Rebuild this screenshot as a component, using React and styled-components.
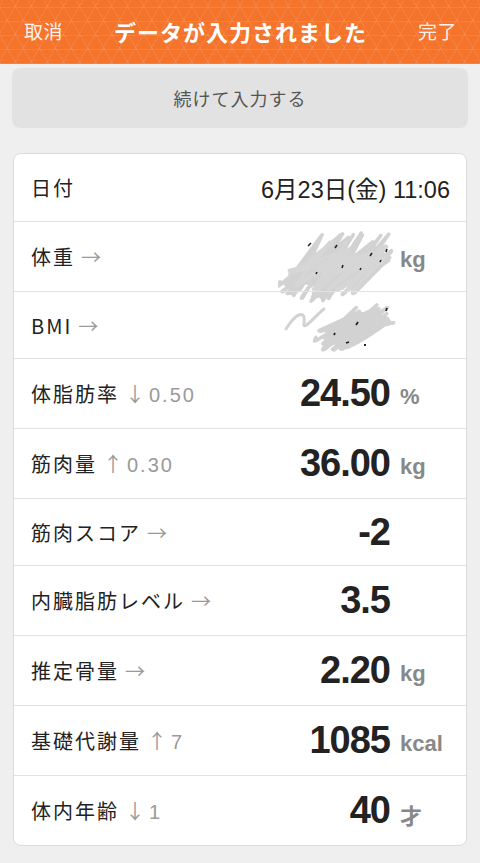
import React from "react"
import styled, { createGlobalStyle } from "styled-components"

const GlobalStyle = createGlobalStyle`
  html, body {
    margin: 0;
    padding: 0;
    background: #efefef;
  }
  body {
    font-family: "Liberation Sans", "Noto Sans CJK JP", sans-serif;
    color: #222;
  }
`

const Page = styled.div`
  min-height: 863px;
  background: #efefef;
`

const Header = styled.header`
  align-items: center;
  background-color: #f5742c;
  background-image:
    repeating-linear-gradient(0deg, rgba(255, 255, 255, 0.09) 0 1px, transparent 1px 13.9px),
    repeating-linear-gradient(60deg, rgba(255, 255, 255, 0.09) 0 1px, transparent 1px 13.9px),
    repeating-linear-gradient(-60deg, rgba(255, 255, 255, 0.09) 0 1px, transparent 1px 13.9px);
  display: flex;
  height: 64px;
  justify-content: space-between;
  padding: 0 23px 0 24px;
  box-sizing: border-box;
`

const NavButton = styled.span`
  color: rgba(255, 255, 255, 0.92);
  font-family: "Noto Sans CJK JP", sans-serif;
  font-size: 19px;
  letter-spacing: 0.5px;
  margin-top: -3px;
`

const Title = styled.h1`
  color: #fff;
  font-family: "Noto Sans CJK JP", sans-serif;
  font-size: 22px;
  font-weight: 700;
  letter-spacing: 1px;
  margin: -3px 0 0;
`

const Content = styled.main`
  display: flex;
  flex-direction: column;
  gap: 25px;
  padding: 4px 12px 15px;
`

const ContinueButton = styled.button`
  background: #e2e2e2;
  border: none;
  border-radius: 8px;
  color: #555;
  font-family: "Noto Sans CJK JP", sans-serif;
  font-size: 18px;
  height: 60px;
  letter-spacing: 1px;
  width: 100%;
`

const Card = styled.section`
  background: #fff;
  border: 1px solid #dcdcdc;
  border-radius: 8px;
  overflow: hidden;
  margin: 0 1px;
`

const Row = styled.div`
  align-items: center;
  box-sizing: border-box;
  display: grid;
  grid-template-columns: ${(p) => (p.$date ? "1fr auto" : "1fr auto 66px")};
  column-gap: 10px;
  height: ${(p) => (p.$short ? "67px" : "70px")};
  padding: ${(p) => (p.$date ? "0 16px 0 17px" : "0 0 0 17px")};
  position: relative;

  & + & {
    border-top: 1px solid #e2e2e2;
  }
`

const Label = styled.div`
  align-items: baseline;
  display: flex;
  font-family: "Noto Sans CJK JP", sans-serif;
  font-size: 20px;
  letter-spacing: 2px;
  white-space: nowrap;
`

const Delta = styled.span`
  color: #9a9a9a;
  font-family: "Liberation Sans", "Noto Sans CJK JP", sans-serif;
  font-size: 20px;
  letter-spacing: 2px;
  margin-left: 6px;

  b {
    font-family: "Noto Sans CJK JP", sans-serif;
    font-weight: 400;
    letter-spacing: 0;
    margin-right: 4px;
  }
`

const DateValue = styled.div`
  font-size: 23.5px;
  white-space: nowrap;
`

const Value = styled.div`
  font-size: 38px;
  font-weight: 700;
  letter-spacing: -1px;
  text-align: right;
`

const Unit = styled.div`
  color: #888;
  font-family: "Liberation Sans", "Noto Sans CJK JP", sans-serif;
  font-size: 22px;
  font-weight: 700;
  margin-top: 6px;
`

const Scribble = styled.svg`
  left: ${(p) => p.$x}px;
  pointer-events: none;
  position: absolute;
  top: ${(p) => p.$y}px;
`

// hand-drawn masking over the hidden values
const scribblePath = (w, h, n, seed) => {
  let s = seed
  const rnd = () => {
    s = (s * 9301 + 49297) % 233280
    return s / 233280
  }
  let d = `M 2 ${(h * 0.7).toFixed(1)}`
  for (let i = 0; i < n; i++) {
    const x = (i / (n - 1)) * (w - 50)
    const lo = h - 3 - rnd() * h * 0.45
    const hi = 3 + rnd() * h * 0.45
    d += ` Q ${(x - 4 + rnd() * 10).toFixed(1)} ${(lo + 4).toFixed(1)} ${(x + rnd() * 10).toFixed(1)} ${lo.toFixed(1)}`
    d += ` L ${(x + 36 + rnd() * 14).toFixed(1)} ${hi.toFixed(1)}`
  }
  return d
}

const WeightScribble = () => (
  <Scribble $x={264} $y={8} width="122" height="74" viewBox="0 0 122 74">
    <path d={scribblePath(122, 74, 46, 7)} fill="none" stroke="#d2d2d2" strokeWidth="3.5" strokeLinejoin="round" strokeLinecap="round" />
    <path d={scribblePath(110, 60, 20, 91)} transform="translate(8 6)" fill="none" stroke="#d6d6d6" strokeWidth="3" strokeLinejoin="round" strokeLinecap="round" />
    <path d="M30 16 l3 -3 M57 18 l2 -3 M64 38 l1 -3 M92 26 l2 -3 M108 22 l1 -3 M82 40 l1 -2 M38 44 l1 -2 M102 32 l1 -2" stroke="#222" strokeWidth="1.6" />
  </Scribble>
)

const BmiScribble = () => (
  <Scribble $x={268} $y={7} width="118" height="56" viewBox="0 0 118 56">
    <path d="M4 30 C 14 14, 24 10, 22 24 C 20 34, 36 14, 42 10" fill="none" stroke="#d2d2d2" strokeWidth="3" strokeLinecap="round" />
    <path d={scribblePath(82, 52, 30, 31)} transform="translate(32 2)" fill="none" stroke="#d2d2d2" strokeWidth="3.5" strokeLinejoin="round" strokeLinecap="round" />
    <path d="M104 12 l1 -3 M74 26 l2 -3 M64 44 l3 -1 M52 36 l1 -2 M82 46 l2 0" stroke="#222" strokeWidth="1.8" />
  </Scribble>
)

const rows = [
  { label: "体重", arrow: "→", value: "", unit: "kg", scribble: <WeightScribble /> },
  { label: "BMI", arrow: "→", value: "", unit: "", short: true, scribble: <BmiScribble /> },
  { label: "体脂肪率", arrow: "↓", diff: "0.50", value: "24.50", unit: "%" },
  { label: "筋肉量", arrow: "↑", diff: "0.30", value: "36.00", unit: "kg" },
  { label: "筋肉スコア", arrow: "→", value: "-2", unit: "", short: true },
  { label: "内臓脂肪レベル", arrow: "→", value: "3.5", unit: "" },
  { label: "推定骨量", arrow: "→", value: "2.20", unit: "kg" },
  { label: "基礎代謝量", arrow: "↑", diff: "7", value: "1085", unit: "kcal" },
  { label: "体内年齢", arrow: "↓", diff: "1", value: "40", unit: "才" },
]

const App = () => (
  <Page>
    <GlobalStyle />
    <Header>
      <NavButton>取消</NavButton>
      <Title>データが入力されました</Title>
      <NavButton>完了</NavButton>
    </Header>

    <Content>
      <ContinueButton>続けて入力する</ContinueButton>

      <Card>
        <Row $date $short>
          <Label>日付</Label>
          <DateValue>6月23日(金) 11:06</DateValue>
        </Row>
        {rows.map((r) => (
          <Row key={r.label} $short={r.short}>
            <Label>
              {r.label}
              <Delta>
                <b>{r.arrow}</b>
                {r.diff}
              </Delta>
            </Label>
            <Value>{r.value}</Value>
            <Unit>{r.unit}</Unit>
            {r.scribble}
          </Row>
        ))}
      </Card>
    </Content>
  </Page>
)

export default App
